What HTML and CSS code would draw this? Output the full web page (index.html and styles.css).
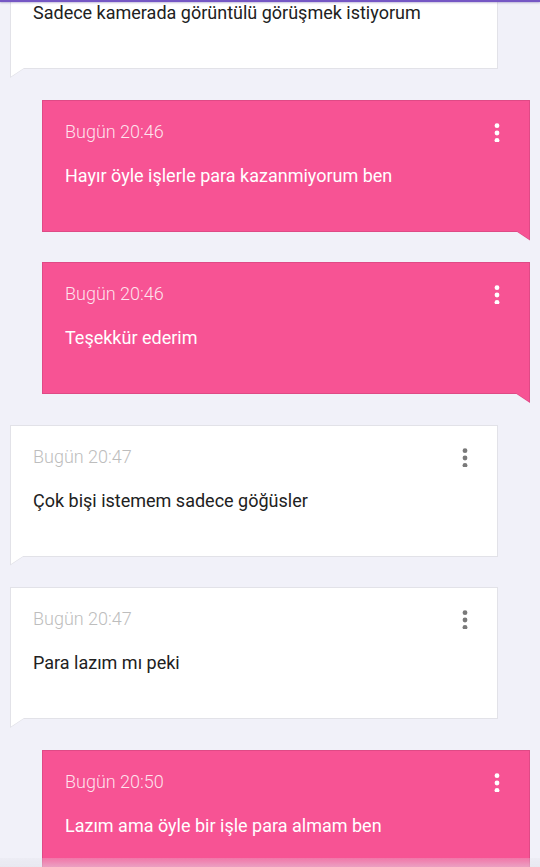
FILE: index.html
```html
<!DOCTYPE html>
<html lang="tr">
<head>
<meta charset="utf-8">
<title>Sohbet</title>
<link rel="stylesheet" href="styles.css">
</head>
<body>
<div class="topbar"></div>
<div class="thread">
  <div class="msg in">
    <div class="head"><span class="time">Bugün 20:45</span><svg class="dots" viewBox="0 0 6 20" width="6" height="20"><circle cx="3" cy="3.7" r="2.4"/><circle cx="3" cy="11" r="2.4"/><circle cx="3" cy="18.3" r="2.4"/></svg></div>
    <p class="text">Sadece kamerada görüntülü görüşmek istiyorum</p>
  </div>
  <div class="msg out">
    <div class="head"><span class="time">Bugün 20:46</span><svg class="dots" viewBox="0 0 6 20" width="6" height="20"><circle cx="3" cy="3.7" r="2.4"/><circle cx="3" cy="11" r="2.4"/><circle cx="3" cy="18.3" r="2.4"/></svg></div>
    <p class="text">Hayır öyle işlerle para kazanmiyorum ben</p>
  </div>
  <div class="msg out">
    <div class="head"><span class="time">Bugün 20:46</span><svg class="dots" viewBox="0 0 6 20" width="6" height="20"><circle cx="3" cy="3.7" r="2.4"/><circle cx="3" cy="11" r="2.4"/><circle cx="3" cy="18.3" r="2.4"/></svg></div>
    <p class="text">Teşekkür ederim</p>
  </div>
  <div class="msg in">
    <div class="head"><span class="time">Bugün 20:47</span><svg class="dots" viewBox="0 0 6 20" width="6" height="20"><circle cx="3" cy="3.7" r="2.4"/><circle cx="3" cy="11" r="2.4"/><circle cx="3" cy="18.3" r="2.4"/></svg></div>
    <p class="text">Çok bişi istemem sadece göğüsler</p>
  </div>
  <div class="msg in">
    <div class="head"><span class="time">Bugün 20:47</span><svg class="dots" viewBox="0 0 6 20" width="6" height="20"><circle cx="3" cy="3.7" r="2.4"/><circle cx="3" cy="11" r="2.4"/><circle cx="3" cy="18.3" r="2.4"/></svg></div>
    <p class="text">Para lazım mı peki</p>
  </div>
  <div class="msg out">
    <div class="head"><span class="time">Bugün 20:50</span><svg class="dots" viewBox="0 0 6 20" width="6" height="20"><circle cx="3" cy="3.7" r="2.4"/><circle cx="3" cy="11" r="2.4"/><circle cx="3" cy="18.3" r="2.4"/></svg></div>
    <p class="text">Lazım ama öyle bir işle para almam ben</p>
  </div>
</div>
<div class="bottomshade"></div>
</body>
</html>
```

FILE: styles.css
```css
html, body {
  margin: 0;
  padding: 0;
  height: 100%;
  overflow: hidden;
  background: #f1f1f9;
  font-family: Roboto, "Noto Sans", "Liberation Sans", sans-serif;
}

.topbar {
  position: fixed;
  top: 0;
  left: 0;
  right: 0;
  height: 2px;
  background: #7557c4;
  box-shadow: 0 1px 2px rgba(80, 60, 150, 0.35);
  z-index: 5;
}

.thread {
  display: flex;
  flex-direction: column;
  gap: 30.5px;
  margin-top: -63px;
}

.msg {
  position: relative;
  box-sizing: border-box;
  width: 488px;
  height: 132px;
  padding: 21px 29px 0 22px;
  border: 1px solid #e2e2e8;
  background: #ffffff;
  flex: none;
}

.msg.in {
  margin-left: 10px;
}

.msg.out {
  margin-left: 42px;
  background: #f75394;
  border-color: #df4a86;
}

.head {
  display: flex;
  justify-content: space-between;
  align-items: flex-start;
  height: 20px;
}

.time {
  font-size: 18px;
  line-height: 20px;
  font-weight: 300;
  color: #bdbdbd;
}

.out .time {
  color: rgba(255, 255, 255, 0.85);
}

.dots {
  display: block;
  fill: #7a7a7a;
}

.out .dots {
  fill: #ffffff;
}

.text {
  margin: 24px 0 0;
  font-size: 18px;
  line-height: 20px;
  font-weight: 400;
  color: #212121;
}

.out .text {
  color: #ffffff;
}

/* bubble tails */
.msg::before,
.msg::after {
  content: "";
  position: absolute;
  top: 100%;
}

.in::before {
  left: -1px;
  width: 15px;
  height: 10px;
  background: #e2e2e8;
  clip-path: polygon(0 0, 100% 0, 0 100%);
}

.in::after {
  left: 0;
  width: 13px;
  height: 8.5px;
  background: #ffffff;
  clip-path: polygon(0 0, 100% 0, 0 100%);
}

.out::before {
  right: -1px;
  width: 15px;
  height: 10px;
  background: #df4a86;
  clip-path: polygon(0 0, 100% 0, 100% 100%);
}

.out::after {
  right: 0;
  width: 13px;
  height: 8.5px;
  background: #f75394;
  clip-path: polygon(0 0, 100% 0, 100% 100%);
}

.bottomshade {
  position: fixed;
  left: 0;
  right: 0;
  bottom: 0;
  height: 9px;
  background: linear-gradient(to bottom, rgba(225, 225, 232, 0.25), rgba(225, 225, 232, 0.55));
  z-index: 5;
}
```
